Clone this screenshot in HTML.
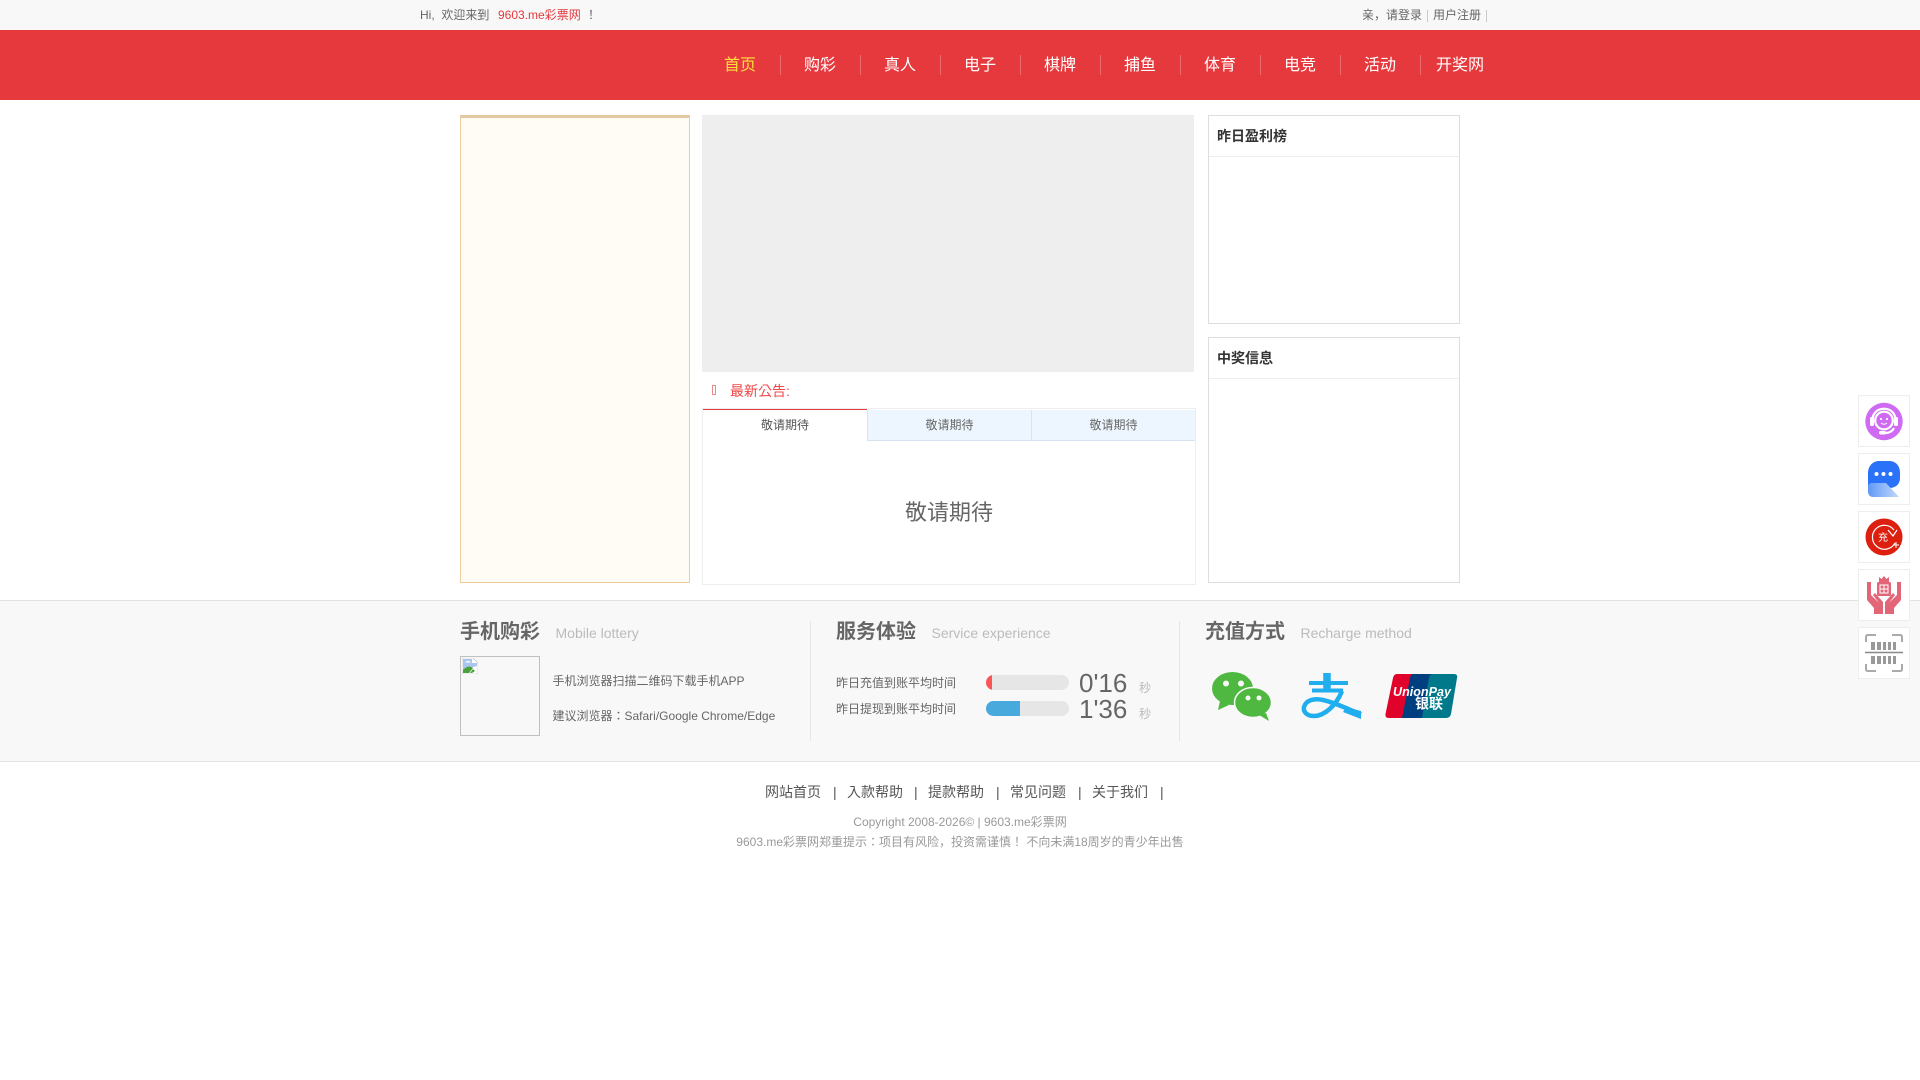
<!DOCTYPE html>
<html><head><meta charset="utf-8"><title>9603.me彩票网</title>
<style>
html,body{margin:0;padding:0;background:#fff;width:1920px;height:1080px;overflow:hidden}
body{position:relative;font-family:"Liberation Sans","Noto Sans CJK KR",sans-serif;font-size:12px;color:#666}
.a{position:absolute;white-space:nowrap;line-height:1}
.b{position:absolute;box-sizing:border-box}
.nav{position:absolute;top:31px;height:70px;width:80px;line-height:70px;text-align:center;color:#fff;font-size:16px}
.sep{position:absolute;top:55px;height:20px;width:1px;background:#ee6b70}
.tab{position:absolute;top:410px;height:31px;width:165px;box-sizing:border-box;text-align:center;line-height:31px;background:#edf6fe;border-bottom:1px solid #d8e2f3;border-right:1px solid #d8e2f3;color:#666}
.h{font-size:20px;font-weight:bold;color:#666}
.en{font-size:14px;color:#bbb}
.side{position:absolute;left:1858px;width:52px;height:52px;box-sizing:border-box;border:1px solid #eee;background:#fff}
.side svg{position:absolute;left:0;top:0}
.f{font-size:14px;color:#555;top:785px}
</style></head><body>
<div class="b" style="left:0;top:0;width:1920px;height:30px;background:#f8f8f8"></div>
<div class="a" style="left:420px;top:9px">Hi,&nbsp; 欢迎来到</div>
<div class="a" style="left:498px;top:9px;color:#e5383e">9603.me彩票网</div>
<div class="a" style="left:585px;top:9px">！</div>
<div class="a" style="left:1362px;top:9px">亲，请登录</div>
<div class="b" style="left:1427px;top:10px;width:1px;height:12px;background:#ccc"></div>
<div class="a" style="left:1433px;top:9px">用户注册</div>
<div class="b" style="left:1486px;top:10px;width:1px;height:12px;background:#ccc"></div>

<div class="b" style="left:0;top:30px;width:1920px;height:70px;background:#e6393e"></div>
<div class="nav" style="left:700px;color:#ffe03c">首页</div><div class="sep" style="left:780px"></div>
<div class="nav" style="left:780px">购彩</div><div class="sep" style="left:860px"></div>
<div class="nav" style="left:860px">真人</div><div class="sep" style="left:940px"></div>
<div class="nav" style="left:940px">电子</div><div class="sep" style="left:1020px"></div>
<div class="nav" style="left:1020px">棋牌</div><div class="sep" style="left:1100px"></div>
<div class="nav" style="left:1100px">捕鱼</div><div class="sep" style="left:1180px"></div>
<div class="nav" style="left:1180px">体育</div><div class="sep" style="left:1260px"></div>
<div class="nav" style="left:1260px">电竞</div><div class="sep" style="left:1340px"></div>
<div class="nav" style="left:1340px">活动</div><div class="sep" style="left:1420px"></div>
<div class="nav" style="left:1420px">开奖网</div>

<div class="b" style="left:460px;top:115px;width:230px;height:468px;background:#fffcf5;border:1px solid #eccd9c;border-top:3px solid #e3c9a3"></div>
<div class="b" style="left:702px;top:115px;width:492px;height:257px;background:#eee"></div>

<div class="b" style="left:712px;top:385px;width:4px;height:10px;border:1px solid #f08a8a"></div>
<div class="a" style="left:730px;top:384px;font-size:14px;color:#f04848">最新公告:</div>

<div class="b" style="left:702px;top:408px;width:494px;height:177px;border:1px solid #eee;background:#fff"></div>
<div class="b" style="left:703px;top:409px;width:164px;height:2px;background:#e6393e"></div>
<div class="tab" style="left:703px;width:164px;background:#fff;border:0;color:#555;top:410px">敬请期待</div>
<div class="tab" style="left:867px;border-left:1px solid #d8e2f3">敬请期待</div>
<div class="tab" style="left:1032px;border-right:0;width:163px">敬请期待</div>
<div class="a" style="left:702px;width:494px;text-align:center;top:502px;font-size:22px;color:#666">敬请期待</div>

<div class="b" style="left:1208px;top:115px;width:252px;height:209px;border:1px solid #ddd;background:#fff"></div>
<div class="b" style="left:1209px;top:156px;width:250px;height:1px;background:#eee"></div>
<div class="a" style="left:1217px;top:129px;font-size:14px;font-weight:bold;color:#333">昨日盈利榜</div>
<div class="b" style="left:1208px;top:337px;width:252px;height:246px;border:1px solid #ddd;background:#fff"></div>
<div class="b" style="left:1209px;top:378px;width:250px;height:1px;background:#eee"></div>
<div class="a" style="left:1217px;top:351px;font-size:14px;font-weight:bold;color:#333">中奖信息</div>

<div class="b" style="left:0;top:600px;width:1920px;height:162px;background:#f8f8f8;border-top:1px solid #e3e3e3;border-bottom:1px solid #e3e3e3"></div>

<div class="a h" style="left:460px;top:622px">手机购彩</div>
<div class="a en" style="left:555.500px;top:626px">Mobile lottery</div>
<div class="b" style="left:460px;top:656px;width:80px;height:80px;border:1px solid #c0c0c0">
<svg width="16" height="16" viewBox="0 0 16 16" style="position:absolute;left:1px;top:1px"><path d="M0 0H11L16 5V16H0Z" fill="#fff" stroke="#b8b8b8" stroke-width=".6"/><path d="M1 1H10V5H15V8L1 12Z" fill="#a9c6ee"/><path d="M1 15V12C5 8 8 8 11 10L7 15Z" fill="#4aa23c"/><path d="M11 11L13 13L10 15H8Z" fill="#4aa23c"/><path d="M3 4.500C4 2.500 8 2.500 9 4.500Z" fill="#fff"/></svg></div>
<div class="a" style="left:552.500px;top:675px">手机浏览器扫描二维码下载手机APP</div>
<div class="a" style="left:552.500px;top:710px">建议浏览器：Safari/Google Chrome/Edge</div>
<div class="b" style="left:810px;top:621px;width:1px;height:120px;background:#e6e6e6"></div>

<div class="a h" style="left:836px;top:622px">服务体验</div>
<div class="a en" style="left:931.500px;top:626px">Service experience</div>
<div class="a" style="left:836px;top:677px">昨日充值到账平均时间</div>
<div class="a" style="left:836px;top:703px">昨日提现到账平均时间</div>
<div class="b" style="left:986px;top:675px;width:83px;height:15px;border-radius:8px;background:#e6e6e6;overflow:hidden"><div style="width:6px;height:15px;background:#fb5558"></div></div>
<div class="b" style="left:986px;top:701px;width:83px;height:15px;border-radius:8px;background:#e6e6e6;overflow:hidden"><div style="width:34px;height:15px;background:#48a9dc"></div></div>
<div class="a" style="left:1079px;top:670px;font-size:26px;color:#666">0'16</div>
<div class="a" style="left:1079px;top:696px;font-size:26px;color:#666">1'36</div>
<div class="a" style="left:1139px;top:682px;color:#bbb">秒</div>
<div class="a" style="left:1139px;top:708px;color:#bbb">秒</div>
<div class="b" style="left:1179px;top:621px;width:1px;height:120px;background:#e6e6e6"></div>

<div class="a h" style="left:1205px;top:622px">充值方式</div>
<div class="a en" style="left:1300.500px;top:626px">Recharge method</div>

<svg class="b" style="left:1205px;top:665px" width="80" height="62" viewBox="0 0 80 62">
<ellipse cx="27.500" cy="23.500" rx="20.500" ry="16.500" fill="#4fb840"/>
<path d="M15 36L13 45L24 40Z" fill="#4fb840"/>
<ellipse cx="48" cy="37.500" rx="18.500" ry="15" fill="#4fb840" stroke="#f8f8f8" stroke-width="1.500"/>
<path d="M54 50L64 56L61 48Z" fill="#4fb840"/>
<circle cx="21" cy="18.500" r="3" fill="#f8f8f8"/><circle cx="36" cy="18.500" r="3" fill="#f8f8f8"/>
<circle cx="43" cy="33" r="2.500" fill="#f8f8f8"/><circle cx="54" cy="33" r="2.500" fill="#f8f8f8"/>
</svg>

<svg class="b" style="left:1296px;top:668px" width="70" height="56" viewBox="0 0 70 56">
<g fill="none" stroke="#21aeef">
<path d="M31 5V22" stroke-width="7.500"/>
<path d="M13 15H52" stroke-width="4"/>
<path d="M16 22.500H47" stroke-width="4"/>
<path d="M46 23C40 38 28 48 18 48C10 48 7 43 8 39C10 32 18 30 27 32C40 35 52 41 65 46.500" stroke-width="4.500"/>
</g><path d="M50 39L65 43V51L47 44Z" fill="#21aeef"/></svg>

<svg class="b" style="left:1385px;top:674px" width="73" height="45" viewBox="0 0 73 45">
<path d="M12 0H30L21 44H4Q0 44 .5 40L8 4Q9 0 12 0Z" fill="#e1022b"/>
<path d="M28 0H50L41 44H17L25 4Q26 0 28 0Z" fill="#003f7f"/>
<path d="M48 0H69Q73 0 72 4L66 40Q65 44 61 44H37L44 4Q45 0 48 0Z" fill="#007a8a"/>
<text x="8" y="22" font-family="Liberation Sans" font-weight="bold" font-style="italic" font-size="12.500" fill="#fff" textLength="58" lengthAdjust="spacingAndGlyphs">UnionPay</text>
<text x="30" y="34.500" font-family="Noto Sans CJK SC" font-weight="bold" font-size="14" fill="#fff" textLength="28" lengthAdjust="spacingAndGlyphs">银联</text>
</svg>

<div class="side" style="top:395px"><svg width="50" height="50" viewBox="0 0 50 50"><circle cx="25" cy="25.500" r="18.700" fill="#cf6bf2"/>
<g fill="none" stroke="#fff" stroke-width="2.200"><circle cx="25" cy="24.500" r="8.800" fill="#cf6bf2"/><path d="M13.500 24C13.500 9 36.500 9 36.500 24"/><path d="M35 32C33 36 30 37 26 37"/></g>
<rect x="11" y="21" width="4" height="9" fill="#fff" rx="1.500"/><rect x="35" y="21" width="4" height="9" fill="#fff" rx="1.500"/><rect x="20" y="35" width="7" height="3.500" rx="1.700" fill="#fff"/>
<circle cx="22" cy="23" r="1.100" fill="#fff"/><circle cx="28" cy="23" r="1.100" fill="#fff"/><path d="M22 27Q25 29.500 28 27" stroke="#fff" fill="none"/></svg></div>

<div class="side" style="top:453px"><svg width="50" height="50" viewBox="0 0 50 50"><defs><linearGradient id="g" x1="0" x2="1"><stop offset="0" stop-color="#5f98f5"/><stop offset="1" stop-color="#c4d9fb"/></linearGradient></defs>
<path d="M9 33V19C9 12 14 7 20 7H30C37 7 41 12 41 19V24C41 30 37 34 30 34H9Z" fill="#2a72f8"/>
<path d="M9 33C9 30 11 29 13 29H27L40 43H14C11 43 9 41 9 37Z" fill="url(#g)"/>
<circle cx="17.500" cy="20" r="2" fill="#fff"/><circle cx="24.500" cy="20" r="2" fill="#fff"/><circle cx="31.500" cy="20" r="2" fill="#fff"/></svg></div>

<div class="side" style="top:511px"><svg width="50" height="50" viewBox="0 0 50 50"><circle cx="25" cy="25" r="18.500" fill="#dc1f0e"/>
<path d="M35 18A12 12 0 1 0 36 31" fill="none" stroke="#fff" stroke-width="1.200"/><path d="M29 18L34 24L38 18" fill="none" stroke="#fff" stroke-width="1.200"/><path d="M37 30V36M34 33H40" stroke="#fff" stroke-width="1"/>
<text x="19" y="29" font-family="Noto Sans CJK SC" font-size="10" fill="#fff">充</text></svg></div>

<div class="side" style="top:569px"><svg width="50" height="50" viewBox="0 0 50 50"><g fill="#e26677">
<path d="M8 12H12V25L20 33L14 25L16 23L24 32V44H15V38L8 30Z"/>
<path d="M42 12H38V25L30 33L36 25L34 23L26 32V44H35V38L42 30Z"/>
<rect x="18" y="12" width="14" height="14" rx="1.500"/><path d="M20 7L22.500 9L25 6L27.500 9L30 7V12H20Z"/></g>
<rect x="21" y="15" width="8" height="8" fill="none" stroke="#fff"/><path d="M21 19H29M25 15V23" stroke="#fff"/></svg></div>

<div class="side" style="top:627px"><svg width="50" height="50" viewBox="0 0 50 50"><g fill="none" stroke="#aaa" stroke-width="2"><path d="M7 14V9Q7 7 9 7H17M43 14V9Q43 7 41 7H33M7 36V41Q7 43 9 43H17M43 36V41Q43 43 41 43H33"/></g>
<path d="M6 24.500H44" stroke="#888" stroke-width="1.500"/>
<g fill="#999"><rect x="12" y="14" width="4" height="8"/><rect x="18" y="14" width="4" height="8"/><rect x="24" y="14" width="3" height="8"/><rect x="29" y="14" width="3" height="8"/><rect x="34" y="14" width="3" height="8"/>
<rect x="12" y="28" width="4" height="8"/><rect x="18" y="28" width="4" height="8"/><rect x="24" y="28" width="3" height="8"/><rect x="29" y="28" width="3" height="8"/><rect x="34" y="28" width="3" height="8"/></g></svg></div>

<div class="a f" style="left:765px">网站首页</div><div class="a f" style="left:833px">|</div>
<div class="a f" style="left:847px">入款帮助</div><div class="a f" style="left:914px">|</div>
<div class="a f" style="left:928px">提款帮助</div><div class="a f" style="left:996px">|</div>
<div class="a f" style="left:1010px">常见问题</div><div class="a f" style="left:1078px">|</div>
<div class="a f" style="left:1092px">关于我们</div><div class="a f" style="left:1160px">|</div>
<div class="a" style="left:0;width:1920px;text-align:center;top:816px;color:#999">Copyright 2008-2026© | 9603.me彩票网</div>
<div class="a" style="left:0;width:1920px;text-align:center;top:836px;color:#999">9603.me彩票网郑重提示：项目有风险，投资需谨慎！ 不向未满18周岁的青少年出售</div>
</body></html>
